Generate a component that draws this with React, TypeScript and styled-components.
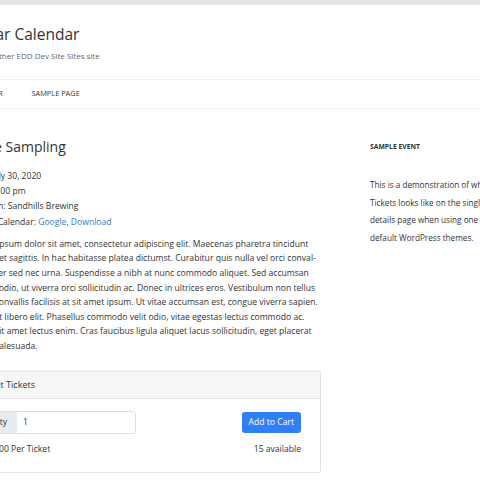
import styled, { createGlobalStyle } from 'styled-components';

const GlobalStyle = createGlobalStyle`
  html, body {
    margin: 0;
    padding: 0;
    overflow: hidden;
    background: #fff;
  }

  body {
    font-family: "Open Sans", "Noto Sans", sans-serif;
    color: #333;
    -webkit-font-smoothing: antialiased;
  }
`;

const bodyLines = [
  'Lorem ipsum dolor sit amet, consectetur adipiscing elit. Maecenas pharetra tincidunt',
  'mauris et sagittis. In hac habitasse platea dictumst. Curabitur quis nulla vel orci conval-',
  'lis vesper sed nec urna. Suspendisse a nibh at nunc commodo aliquet. Sed accumsan',
  'magna odio, ut viverra orci sollicitudin ac. Donec in ultrices eros. Vestibulum non tellus',
  'purus convallis facilisis at sit amet ipsum. Ut vitae accumsan est, congue viverra sapien.',
  'Etiam ut libero elit. Phasellus commodo velit odio, vitae egestas lectus commodo ac.',
  'Morbi sit amet lectus enim. Cras faucibus ligula aliquet lacus sollicitudin, eget placerat',
  'diam malesuada.',
];

const sidebarLines = [
  'This is a demonstration of what Event',
  'Tickets looks like on the single event',
  'details page when using one of the',
  'default WordPress themes.',
];

export default function App() {
  return (
    <>
      <GlobalStyle />
      <TopBar />
      <Header>
        <Inner>
          <SiteTitle>Sugar Calendar</SiteTitle>
          <Tagline>Just another EDD Dev Site Sites site</Tagline>
        </Inner>
      </Header>
      <Nav>
        <Inner>
          <NavList>
            <NavItem>Calendar</NavItem>
            <NavItem>Sample Page</NavItem>
          </NavList>
        </Inner>
      </Nav>
      <Content>
        <Columns>
          <Main>
            <EventTitle>Wine Sampling</EventTitle>
            <Details>
              <li>Date:{'\u200a'}July 30, 2020</li>
              <li>Time: 8:00 pm</li>
              <li>Location: Sandhills Brewing</li>
              <li>
                Add to Calendar: <Link>Google</Link>, <Link>Download</Link>
              </li>
            </Details>
            <Description>
              {bodyLines.map((line) => (
                <span key={line}>{line}</span>
              ))}
            </Description>
            <TicketBox>
              <TicketHeader>Get Tickets</TicketHeader>
              <TicketBody>
                <TicketRow>
                  <QuantityGroup>
                    <QuantityLabel>Qty</QuantityLabel>
                    <QuantityInput defaultValue="1" />
                  </QuantityGroup>
                  <CartButton type="button">Add to Cart</CartButton>
                </TicketRow>
                <TicketRow>
                  <Price>$10.00 Per Ticket</Price>
                  <Available>15 available</Available>
                </TicketRow>
              </TicketBody>
            </TicketBox>
          </Main>
          <Sidebar>
            <WidgetTitle>Sample Event</WidgetTitle>
            <WidgetText>
              {sidebarLines.map((line) => (
                <span key={line}>{line}</span>
              ))}
            </WidgetText>
          </Sidebar>
        </Columns>
      </Content>
    </>
  );
}

const TopBar = styled.div`
  height: 5px;
  background: #e4e4e4;
`;

const Inner = styled.div`
  margin-left: -31px;
`;

const Header = styled.header`
  padding: 18px 0 17px;
  border-bottom: 1px solid #eee;
`;

const SiteTitle = styled.h1`
  margin: 0;
  color: #333;
  font-size: 15.5px;
  font-weight: 400;
  line-height: 22px;
`;

const Tagline = styled.p`
  margin: 5px 0 0;
  color: #666;
  font-size: 8px;
  line-height: 12px;
`;

const Nav = styled.nav`
  border-bottom: 1px solid #eee;
`;

const NavList = styled.ul`
  display: flex;
  gap: 29px;
  margin: 0 0 0 -4px;
  padding: 0;
  list-style: none;
`;

const NavItem = styled.li`
  padding: 8px 0 9px;
  color: #333;
  font-size: 7.4px;
  line-height: 11px;
  text-transform: uppercase;
`;

const Content = styled.main`
  padding-top: 28px;
`;

const Columns = styled.div`
  display: grid;
  grid-template-columns: 352px 200px;
  gap: 49px;
  margin-left: -31px;
`;

const Main = styled.article`
  display: flex;
  flex-direction: column;
`;

const EventTitle = styled.h2`
  margin: 0 0 12px;
  color: #333;
  font-size: 14px;
  font-weight: 400;
  line-height: 20px;
`;

const Details = styled.ul`
  margin: 0 0 7px;
  padding: 0;
  list-style: none;
  color: #333;
  font-size: 8.6px;
  line-height: 15.2px;
`;

const Link = styled.a`
  color: #3a7bbf;
  text-decoration: none;
`;

const Description = styled.p`
  display: flex;
  flex-direction: column;
  margin: 0 0 17px;
  color: #333;
  font-size: 8.6px;
  line-height: 14.6px;
  white-space: nowrap;
`;

const TicketBox = styled.section`
  border: 1px solid #e3e3e3;
  border-radius: 2px;
`;

const TicketHeader = styled.h3`
  margin: 0;
  padding: 7px 19px;
  border-bottom: 1px solid #e3e3e3;
  background: #f7f7f7;
  color: #333;
  font-size: 9px;
  font-weight: 400;
  line-height: 12px;
`;

const TicketBody = styled.div`
  display: flex;
  flex-direction: column;
  gap: 9px;
  padding: 12px 19px 17px 12px;
`;

const TicketRow = styled.div`
  display: flex;
  align-items: center;
  justify-content: space-between;
`;

const QuantityGroup = styled.div`
  display: flex;
  height: 21px;
  border: 1px solid #dcdcdc;
  border-radius: 3px;
  overflow: hidden;
`;

const QuantityLabel = styled.span`
  display: flex;
  align-items: center;
  padding: 0 10px;
  background: #e9ecef;
  color: #333;
  font-size: 8.6px;
`;

const QuantityInput = styled.input`
  width: 106px;
  padding: 0 6px;
  border: none;
  outline: none;
  color: #333;
  font-family: inherit;
  font-size: 8.6px;
`;

const CartButton = styled.button`
  height: 21px;
  padding: 0 7px;
  border: none;
  border-radius: 3px;
  background: #2f7ff6;
  color: #fff;
  font-family: inherit;
  font-size: 8.6px;
`;

const Price = styled.span`
  color: #333;
  font-size: 8.6px;
`;

const Available = styled.span`
  color: #333;
  font-size: 8.6px;
`;

const Sidebar = styled.aside`
  padding-top: 5px;
`;

const WidgetTitle = styled.h4`
  margin: 0 0 24px;
  color: #333;
  font-size: 6.8px;
  font-weight: 700;
  line-height: 10px;
  text-transform: uppercase;
`;

const WidgetText = styled.p`
  display: flex;
  flex-direction: column;
  margin: 0;
  color: #333;
  font-size: 8.2px;
  line-height: 17.5px;
  white-space: nowrap;
`;
